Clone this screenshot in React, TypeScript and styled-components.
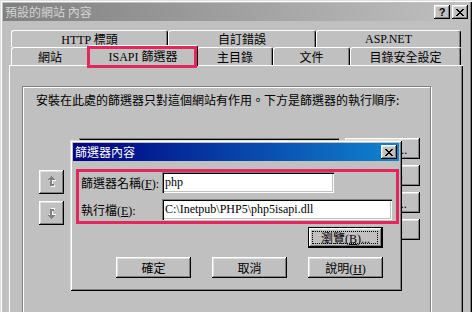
import React from 'react';
import styled, { createGlobalStyle } from 'styled-components';

const GlobalStyle = createGlobalStyle`
  html, body {
    margin: 0;
    padding: 0;
    background: #c0c0c0;
  }
  body {
    font-family: "Liberation Serif", "Noto Sans CJK TC", serif;
    font-size: 12px;
    color: #000;
  }
`;

const raised = `
  box-shadow: inset -1px -1px 0 #000, inset 1px 1px 0 #fff,
    inset -2px -2px 0 #808080, inset 2px 2px 0 #dfdfdf;
`;

const Window = styled.div`
  position: relative;
  width: 472px;
  height: 312px;
  box-sizing: border-box;
  padding: 3px 2px 0 3px;
  background: #c0c0c0;
  overflow: hidden;
  box-shadow: inset 1px 1px 0 #dfdfdf, inset 2px 2px 0 #fff,
    inset -1px 0 0 #000, inset -2px 0 0 #808080;
`;

const TitleBar = styled.div<{ $active?: boolean }>`
  display: flex;
  align-items: center;
  height: 18px;
  padding: 0 2px;
  background: ${(p) =>
    p.$active
      ? 'linear-gradient(to right, #000080, #1084d0)'
      : 'linear-gradient(to right, #808080, #c0c0c0)'};
  color: ${(p) => (p.$active ? '#fff' : '#d4d4d4')};
  font-family: "Noto Sans CJK TC", sans-serif;
  line-height: 18px;
`;

const TitleText = styled.span`
  flex: 1;
  white-space: pre;
`;

const CapButton = styled.div<{ $gap?: number }>`
  width: 16px;
  height: 14px;
  margin-left: ${(p) => p.$gap ?? 0}px;
  background: #c0c0c0;
  display: flex;
  align-items: center;
  justify-content: center;
  color: #000;
  font: bold 11px "Liberation Sans", sans-serif;
  ${raised}
`;

const TabStrip = styled.div`
  margin: 9px 0 0 8px;
`;

const TabRow = styled.div<{ $h: number }>`
  display: flex;
  height: ${(p) => p.$h}px;
`;

const Tab = styled.div<{ $w: number; $selected?: boolean }>`
  position: relative;
  width: ${(p) => (p.$selected ? p.$w + 2 : p.$w)}px;
  height: ${(p) => (p.$selected ? 'calc(100% + 3px)' : '100%')};
  margin: ${(p) => (p.$selected ? '-2px -1px 0' : '0')};
  z-index: ${(p) => (p.$selected ? 2 : 0)};
  box-sizing: border-box;
  flex-shrink: 0;
  background: #c0c0c0;
  border-top: 1px solid #fff;
  border-left: 1px solid #fff;
  border-right: 1px solid #000;
  border-radius: 3px 3px 0 0;
  box-shadow: inset -1px 0 0 #808080;
  display: flex;
  align-items: center;
  justify-content: center;
  padding-bottom: ${(p) => (p.$selected ? 1 : 0)}px;
  white-space: pre;

  ${(p) =>
    p.$selected &&
    `
    &::after {
      content: '';
      position: absolute;
      left: -2px;
      top: 0;
      width: ${p.$w + 2}px;
      height: 22px;
      border: 3px solid #e5265e;
      box-sizing: border-box;
      pointer-events: none;
    }
  `}
`;

const Panel = styled.div`
  margin-left: 6px;
  width: 454px;
  height: 260px;
  box-sizing: border-box;
  padding: 21px 0 0 13px;
  background: #c0c0c0;
  box-shadow: inset 1px 1px 0 #fff, inset -1px 0 0 #000, inset -2px 0 0 #808080;
`;

const GroupBox = styled.div`
  width: 409px;
  height: 240px;
  box-sizing: border-box;
  border: 1px solid #808080;
  box-shadow: inset 1px 1px 0 #fff, 1px 1px 0 #fff;
  padding: 6px 0 0 13px;
`;

const Intro = styled.div`
  font-family: "Noto Sans CJK TC", sans-serif;
  line-height: 14px;
  height: 14px;
`;

const FilterRow = styled.div`
  display: flex;
  align-items: flex-start;
  margin-top: 31px;
`;

const ArrowColumn = styled.div`
  display: flex;
  flex-direction: column;
  gap: 7px;
  margin: 32px 0 0 3px;
`;

const ArrowButton = styled.div`
  width: 25px;
  height: 24px;
  background: #c0c0c0;
  display: flex;
  align-items: center;
  justify-content: center;
  ${raised}
`;

const ListView = styled.div`
  width: 260px;
  height: 120px;
  margin-left: 15px;
  box-sizing: border-box;
  padding: 2px;
  background: #fff;
  box-shadow: inset 1px 1px 0 #808080, inset 2px 2px 0 #000,
    inset -1px -1px 0 #fff, inset -2px -2px 0 #dfdfdf;
`;

const HeaderRow = styled.div`
  display: flex;
  height: 17px;
`;

const HeaderCell = styled.div<{ $w: number }>`
  width: ${(p) => p.$w}px;
  background: #c0c0c0;
  ${raised}
`;

const ButtonColumn = styled.div`
  display: flex;
  flex-direction: column;
  gap: 6px;
  margin-left: 6px;
`;

const Button = styled.button<{ $default?: boolean }>`
  position: relative;
  width: 75px;
  height: 21px;
  padding: 0;
  border: none;
  background: #c0c0c0;
  color: #000;
  font-family: "Liberation Serif", "Noto Sans CJK TC", serif;
  font-size: 12px;
  white-space: pre;
  ${(p) =>
    p.$default
      ? `
    box-shadow: inset 0 0 0 1px #000, inset -2px -2px 0 #000, inset 2px 2px 0 #fff,
      inset -3px -3px 0 #808080, inset 3px 3px 0 #dfdfdf;
    &::after {
      content: '';
      position: absolute;
      inset: 4px 5px 4px 4px;
      border: 1px dotted #000;
    }
  `
      : raised}
`;

const SubDialog = styled.div`
  position: absolute;
  left: 70px;
  top: 140px;
  z-index: 10;
  width: 332px;
  height: 151px;
  box-sizing: border-box;
  padding: 3px;
  background: #c0c0c0;
  box-shadow: inset 1px 1px 0 #dfdfdf, inset -1px -1px 0 #000,
    inset 2px 2px 0 #fff, inset -2px -2px 0 #808080;
  display: flex;
  flex-direction: column;
`;

const Highlight = styled.div`
  margin: 8px 0 0 3px;
  border: 3px solid #e5265e;
  padding: 0 0 1px 2px;
  display: flex;
  flex-direction: column;
  gap: 6px;
`;

const FieldRow = styled.div`
  display: flex;
  align-items: center;
  height: 21px;
`;

const Label = styled.label`
  width: 81px;
  flex-shrink: 0;
  white-space: pre;
`;

const Field = styled.div<{ $w: number }>`
  width: ${(p) => p.$w}px;
  height: 21px;
  box-sizing: border-box;
  padding: 3px 0 0 3px;
  background: #fff;
  line-height: 15px;
  white-space: pre;
  box-shadow: inset 1px 1px 0 #808080, inset 2px 2px 0 #000,
    inset -1px -1px 0 #fff, inset -2px -2px 0 #c0c0c0;
`;

const ButtonRow = styled.div<{ $top: number }>`
  display: flex;
  justify-content: flex-end;
  gap: 21px;
  margin-top: ${(p) => p.$top}px;
  padding-right: 16px;
`;

const closeGlyph = [
  '##....##',
  '.##..##.',
  '..####..',
  '...##...',
  '..####..',
  '.##..##.',
  '##....##',
];

const PixelIcon = ({ rows, color = '#000' }: { rows: string[]; color?: string }) => (
  <svg width={rows[0].length} height={rows.length} shapeRendering="crispEdges">
    {rows.flatMap((r, y) =>
      [...r].map((c, x) =>
        c === '#' ? <rect key={`${x}-${y}`} x={x} y={y} width={1} height={1} fill={color} /> : null
      )
    )}
  </svg>
);

const Arrow = ({ down }: { down?: boolean }) => {
  const shape = (dx: number, fill: string) => (
    <g transform={`translate(${dx} ${dx})`} fill={fill}>
      <polygon points="4,0 0,4 8,4" />
      <rect x={3} y={4} width={2} height={6} />
      <rect x={5} y={8} width={2} height={2} />
    </g>
  );
  return (
    <svg width={10} height={12} shapeRendering="crispEdges" style={down ? { transform: 'scaleY(-1)' } : undefined}>
      {shape(1, '#fff')}
      {shape(0, '#808080')}
    </svg>
  );
};

const backTabs = [
  { label: 'HTTP 標頭', w: 157 },
  { label: '自訂錯誤', w: 148 },
  { label: 'ASP.NET', w: 145 },
];

const frontTabs = [
  { label: '網站', w: 78 },
  { label: 'ISAPI 篩選器', w: 108, selected: true },
  { label: '主目錄', w: 76 },
  { label: '文件', w: 77 },
  { label: '目錄安全設定', w: 111 },
];

const sideButtons = ['新增(D)...', '移除(R)', '編輯(T)...', '啟用(E)'];

export default function App() {
  return (
    <>
      <GlobalStyle />
      <Window>
        <TitleBar>
          <TitleText>預設的網站 內容</TitleText>
          <CapButton>?</CapButton>
          <CapButton $gap={2}>
            <PixelIcon rows={closeGlyph} />
          </CapButton>
        </TitleBar>

        <TabStrip>
          <TabRow $h={17}>
            {backTabs.map((t) => (
              <Tab key={t.label} $w={t.w}>
                {t.label}
              </Tab>
            ))}
          </TabRow>
          <TabRow $h={18}>
            {frontTabs.map((t) => (
              <Tab key={t.label} $w={t.w} $selected={t.selected}>
                {t.label}
              </Tab>
            ))}
          </TabRow>
        </TabStrip>

        <Panel>
          <GroupBox>
            <Intro>安裝在此處的篩選器只對這個網站有作用。下方是篩選器的執行順序:</Intro>
            <FilterRow>
              <ArrowColumn>
                <ArrowButton>
                  <Arrow />
                </ArrowButton>
                <ArrowButton>
                  <Arrow down />
                </ArrowButton>
              </ArrowColumn>
              <ListView>
                <HeaderRow>
                  <HeaderCell $w={65} />
                  <HeaderCell $w={115} />
                  <HeaderCell $w={76} />
                </HeaderRow>
              </ListView>
              <ButtonColumn>
                {sideButtons.map((b) => (
                  <Button key={b}>{b}</Button>
                ))}
              </ButtonColumn>
            </FilterRow>
          </GroupBox>
        </Panel>

        <SubDialog>
          <TitleBar $active>
            <TitleText>篩選器內容</TitleText>
            <CapButton>
              <PixelIcon rows={closeGlyph} />
            </CapButton>
          </TitleBar>
          <Highlight>
            <FieldRow>
              <Label>
                篩選器名稱(<u>F</u>):
              </Label>
              <Field $w={172}>php</Field>
            </FieldRow>
            <FieldRow>
              <Label>
                執行檔(<u>E</u>):
              </Label>
              <Field $w={230}>C:\Inetpub\PHP5\php5isapi.dll</Field>
            </FieldRow>
          </Highlight>
          <ButtonRow $top={3}>
            <Button $default>
              瀏覽(<u>B</u>)...
            </Button>
          </ButtonRow>
          <ButtonRow $top={9}>
            <Button>確定</Button>
            <Button>取消</Button>
            <Button>
              說明(<u>H</u>)
            </Button>
          </ButtonRow>
        </SubDialog>
      </Window>
    </>
  );
}
